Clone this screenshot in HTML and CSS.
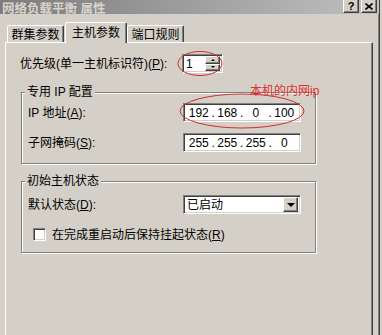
FILE: index.html
```html
<html>
    <head>
        <link rel="stylesheet" href="styles.css">
    </head>
    <body>
        <div class="window">
            <div class="titlebar">
                <span class="title">网络负载平衡 属性</span>
                <div class="caption-btns">
                    <span class="cap-btn">?</span>
                    <span class="cap-btn">
                        <svg width="8" height="7" viewBox="0 0 8 7"><path d="M0.5 0.5 L7.5 6.5 M7.5 0.5 L0.5 6.5" stroke="#000" stroke-width="1.6"/></svg>
                    </span>
                </div>
            </div>
            <div class="body">
                <div class="tabs">
                    <div class="tab first">群集参数</div>
                    <div class="tab active">主机参数</div>
                    <div class="tab">端口规则</div>
                </div>
                <div class="panel">
                    <div class="row">
                        <span class="label wide">优先级(单一主机标识符)(<u>P</u>):</span>
                        <div class="field spin">
                            <span class="spin-val">1</span>
                            <div class="spin-btns">
                                <span class="btn small"><i class="tri up"></i></span>
                                <span class="btn small"><i class="tri down"></i></span>
                            </div>
                        </div>
                    </div>

                    <div class="group first-group">
                        <span class="group-title">专用 IP 配置</span>
                        <div class="row gap-a">
                            <span class="label">IP 地址(<u>A</u>):</span>
                            <div class="field ip">
                                <span class="seg">192</span><span class="dot">.</span>
                                <span class="seg">168</span><span class="dot">.</span>
                                <span class="seg">0</span><span class="dot">.</span>
                                <span class="seg">100</span>
                            </div>
                        </div>
                        <div class="row gap-b">
                            <span class="label">子网掩码(<u>S</u>):</span>
                            <div class="field ip">
                                <span class="seg">255</span><span class="dot">.</span>
                                <span class="seg">255</span><span class="dot">.</span>
                                <span class="seg">255</span><span class="dot">.</span>
                                <span class="seg">0</span>
                            </div>
                        </div>
                    </div>

                    <div class="group second-group">
                        <span class="group-title">初始主机状态</span>
                        <div class="row gap-c">
                            <span class="label">默认状态(<u>D</u>):</span>
                            <div class="field combo">
                                <span class="combo-val">已启动</span>
                                <span class="btn drop"><i class="tri down big"></i></span>
                            </div>
                        </div>
                        <div class="check-row">
                            <span class="checkbox"></span>
                            <span>在完成重启动后保持挂起状态(<u>R</u>)</span>
                        </div>
                    </div>
                </div>
            </div>

            <!-- hand-drawn red notes on top of the screenshot -->
            <svg class="marks" width="382" height="335">
                <ellipse cx="94.5" cy="32.5" rx="28" ry="9" />
                <ellipse cx="200" cy="63.5" rx="22" ry="12" />
                <ellipse cx="242" cy="111" rx="62" ry="17" />
            </svg>
            <span class="note">本机的内网ip</span>
        </div>
    </body>
</html>
```

FILE: styles.css
```css
* {
    box-sizing: border-box;
}
body {
    margin: 0;
    background-color: #d4d0c8;
    font-family: "Liberation Sans", "Noto Sans CJK SC", sans-serif;
    font-size: 12px;
    line-height: 14px;
    color: #000;
}
.window {
    position: relative;
    width: 380px;
    height: 335px;
    overflow: hidden;
    border-right: 1px solid #404040;
    box-shadow: inset -1px 0 #808080;
}
.titlebar {
    height: 14px;
    display: flex;
    align-items: flex-end;
    justify-content: space-between;
    overflow: hidden;
    background: linear-gradient(to right, #7c7c7c, #c0c0c0);
    padding: 0 2px 0 2px;
}
.title {
    font-weight: bold;
    font-size: 12.5px;
    color: #d8d4cc;
    line-height: 14px;
    margin-bottom: -2px;
}
.caption-btns {
    display: flex;
    gap: 2px;
    align-self: flex-start;
    margin-top: -1px;
}
.cap-btn {
    width: 16px;
    height: 14px;
    display: flex;
    align-items: center;
    justify-content: center;
    background-color: #d4d0c8;
    border: 1px solid;
    border-color: #fff #404040 #404040 #fff;
    box-shadow: inset -1px -1px #808080;
    font-weight: bold;
    font-size: 11px;
    font-family: "Liberation Sans", sans-serif;
}
.body {
    padding: 8px 6px 0 5px;
}
.tabs {
    display: flex;
    align-items: flex-end;
    height: 20px;
    padding-left: 2px;
}
.tab {
    height: 17px;
    width: 57px;
    display: flex;
    align-items: center;
    justify-content: center;
    border-left: 1px solid #fff;
    border-top: 1px solid #fff;
    border-right: 1px solid #404040;
    box-shadow: inset -1px 0 #808080;
    border-radius: 2px 2px 0 0;
    padding-top: 1px;
}
.tab.active {
    position: relative;
    z-index: 1;
    height: 21px;
    width: 62px;
    margin-left: 1px;
    margin-bottom: -1px;
    background-color: #d4d0c8;
    padding-bottom: 2px;
}
.panel {
    height: 300px;
    border-top: 1px solid #fff;
    border-left: 1px solid #fff;
    border-right: 1px solid #404040;
    box-shadow: inset -1px 0 #808080;
    padding: 11px 0 0 14px;
}
.row {
    display: flex;
    align-items: center;
    height: 19px;
}
.label {
    width: 155px;
    flex-shrink: 0;
}
.label.wide {
    width: 162px;
}
.field {
    height: 19px;
    background-color: #fff;
    border: 1px solid;
    border-color: #808080 #fff #fff #808080;
    box-shadow: inset 1px 1px #404040, inset -1px -1px #d4d0c8;
}
.spin {
    width: 41px;
    display: flex;
    align-items: center;
    padding: 2px;
}
.spin-val {
    flex: 1;
    padding-left: 1px;
}
.spin-btns {
    display: flex;
    flex-direction: column;
    width: 15px;
    height: 15px;
}
.btn {
    display: flex;
    align-items: center;
    justify-content: center;
    background-color: #d4d0c8;
    border: 1px solid;
    border-color: #fff #404040 #404040 #fff;
    box-shadow: inset -1px -1px #808080;
}
.btn.small {
    height: 7.5px;
}
.tri {
    width: 0;
    height: 0;
    border-left: 2px solid transparent;
    border-right: 2px solid transparent;
}
.tri.up {
    border-bottom: 2px solid #000;
}
.tri.down {
    border-top: 2px solid #000;
}
.tri.big {
    border-left-width: 4px;
    border-right-width: 4px;
    border-top-width: 4px;
}
.group {
    width: 295px;
    margin-left: 1px;
    border: 1px solid #808080;
    box-shadow: inset 1px 1px #fff, 1px 1px #fff;
    padding: 0 0 11px 6px;
}
.first-group {
    margin-top: 19px;
}
.second-group {
    margin-top: 17px;
}
.group-title {
    display: block;
    width: fit-content;
    margin: -8px 0 0 -3px;
    padding: 0 2px;
    background-color: #d4d0c8;
}
.gap-a {
    margin-top: 4px;
}
.gap-b {
    margin-top: 11px;
}
.gap-c {
    margin-top: 7px;
}
.ip {
    width: 118px;
    display: flex;
    align-items: center;
    padding: 0 3px 0 2px;
}
.seg {
    flex: 1;
    text-align: center;
}
.dot {
    width: 3px;
    text-align: center;
}
.combo {
    width: 118px;
    display: flex;
    align-items: center;
    padding: 2px;
}
.combo-val {
    flex: 1;
    padding-left: 1px;
}
.btn.drop {
    width: 15px;
    height: 15px;
}
.check-row {
    display: flex;
    align-items: center;
    margin-top: 14px;
    height: 13px;
    padding-left: 5px;
}
.checkbox {
    width: 13px;
    height: 13px;
    margin-right: 6px;
    background-color: #fff;
    border: 1px solid;
    border-color: #808080 #fff #fff #808080;
    box-shadow: inset 1px 1px #404040, inset -1px -1px #d4d0c8;
}
.marks {
    position: absolute;
    left: 0;
    top: 0;
    pointer-events: none;
}
.marks ellipse {
    fill: none;
    stroke: #d42a2a;
    stroke-width: 1;
}
.note {
    position: absolute;
    left: 250px;
    top: 85px;
    color: #e03030;
    font-size: 12px;
    line-height: 13px;
}
```
